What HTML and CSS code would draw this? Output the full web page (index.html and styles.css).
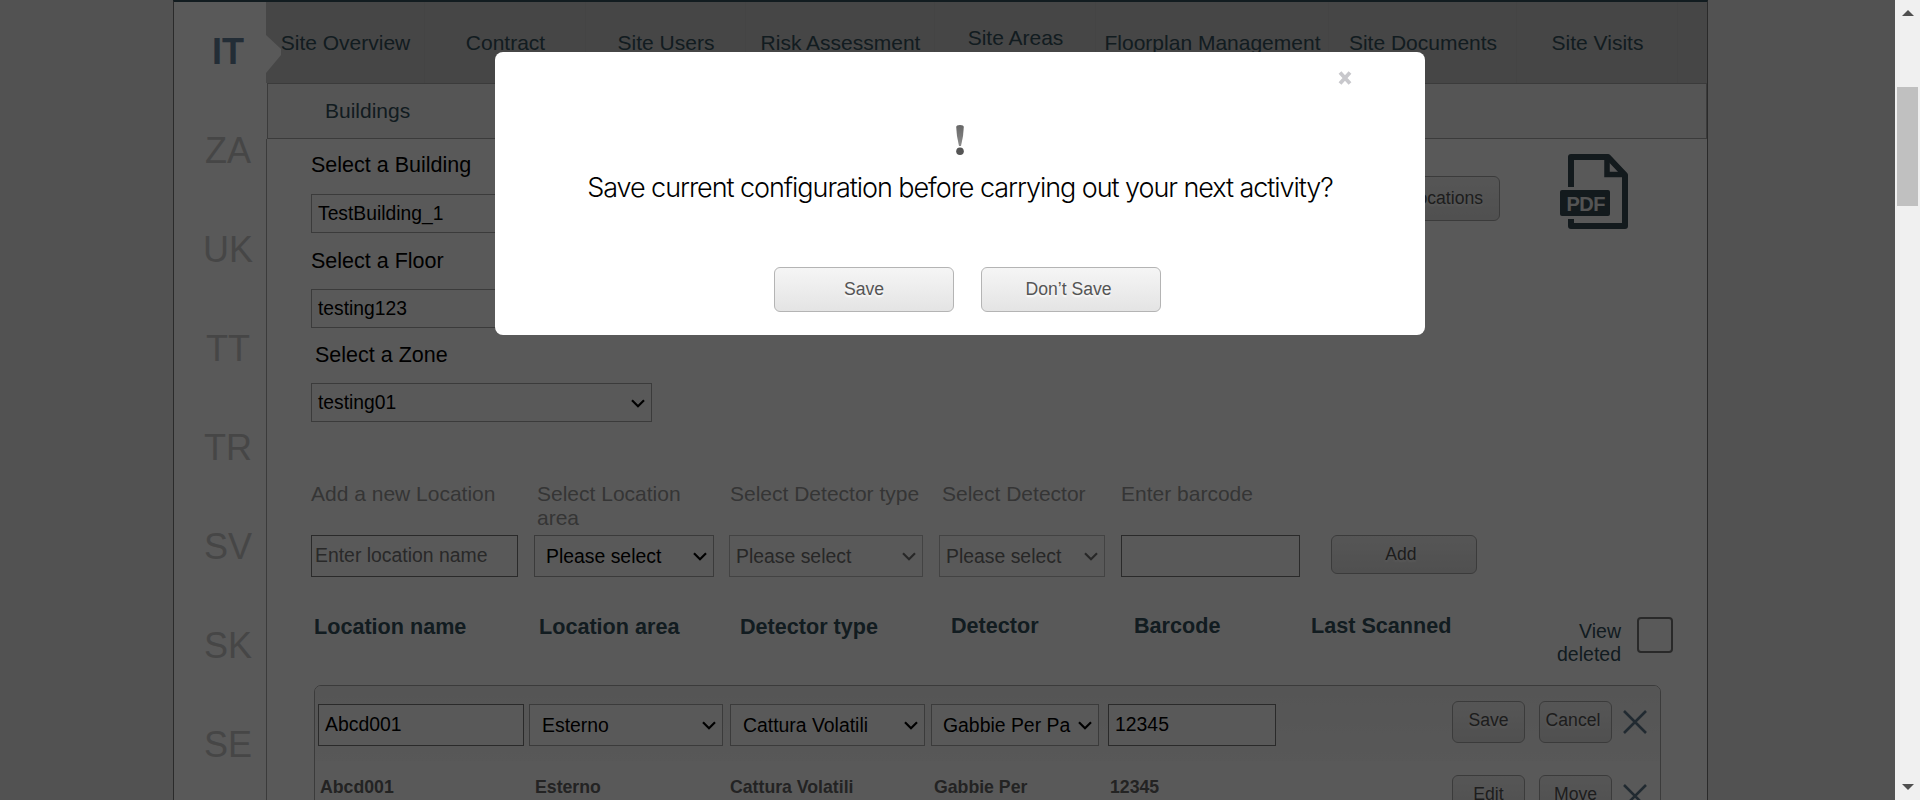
FILE: index.html
```html
<!DOCTYPE html>
<html lang="en">
<head>
<meta charset="utf-8">
<title>Site locations</title>
<link rel="stylesheet" href="styles.css">
</head>
<body>
<svg class="defs" width="0" height="0">
  <symbol id="chev" viewBox="0 0 14 9"><path d="M1 1.3 7 7.3 13 1.3" fill="none" stroke="currentColor" stroke-width="2.2"/></symbol>
  <symbol id="cross" viewBox="0 0 26 26"><path d="M2 2 24 24M24 2 2 24" fill="none" stroke="#60798c" stroke-width="2.6"/></symbol>
</svg>
<div class="page">
  <aside class="side">
    <div class="country current">IT</div><div class="country">ZA</div><div class="country">UK</div><div class="country">TT</div><div class="country">TR</div><div class="country">SV</div><div class="country">SK</div><div class="country">SE</div>
  </aside>
  <main class="main">
    <nav class="nav">
      <svg class="pointer" width="15" height="38" viewBox="0 0 15 38"><path d="M0 0 15 14V20L0 38Z" fill="#fff"/></svg>
      <a>Site Overview</a><a>Contract</a><a>Site Users</a><a>Risk Assessment</a><a class="raised">Site Areas</a><a>Floorplan Management</a><a>Site Documents</a><a>Site Visits</a>
    </nav>
    <div class="subnav">Buildings</div>
    <section class="content">
      <div class="top">
        <div class="pickers">
          <div class="label">Select a Building</div>
          <div class="field pick">TestBuilding_1<svg class="chev"><use href="#chev"/></svg></div>
          <div class="label">Select a Floor</div>
          <div class="field pick">testing123<svg class="chev"><use href="#chev"/></svg></div>
          <div class="label zone">Select a Zone</div>
          <div class="field pick">testing01<svg class="chev"><use href="#chev"/></svg></div>
        </div>
        <div class="btn import">Import Locations</div>
        <svg class="pdf" width="68" height="75" viewBox="0 0 68 75">
          <path d="M11 33V3H48L65 21V72H11V65" fill="none" stroke="#384a54" stroke-width="6" stroke-linejoin="round"/>
          <path d="M47 3V20.500H65" fill="none" stroke="#384a54" stroke-width="5.500"/>
          <rect y="36" width="50" height="26" rx="2" fill="#384a54"/>
          <text x="6.500" y="56.500" textLength="39" class="pdf-text">PDF</text>
        </svg>
      </div>
      <div class="add-row labels">
        <div>Add a new Location</div><div>Select Location area</div><div>Select Detector type</div><div>Select Detector</div><div>Enter barcode</div>
      </div>
      <div class="add-row">
        <div class="field input hint">Enter location name</div>
        <div class="field sel wide">Please select<svg class="chev"><use href="#chev"/></svg></div>
        <div class="field sel off">Please select<svg class="chev"><use href="#chev"/></svg></div>
        <div class="field sel off">Please select<svg class="chev"><use href="#chev"/></svg></div>
        <div class="field input"></div>
        <div class="btn add">Add</div>
      </div>
      <div class="heads">
        <div>Location name</div><div>Location area</div><div>Detector type</div><div class="up">Detector</div><div class="up">Barcode</div><div class="up">Last Scanned</div>
        <div class="deleted">View deleted</div><span class="check"></span>
      </div>
      <div class="table">
        <div class="row edit">
          <div class="field input name">Abcd001</div>
          <div class="field sel area">Esterno<svg class="chev"><use href="#chev"/></svg></div>
          <div class="field sel type">Cattura Volatili<svg class="chev"><use href="#chev"/></svg></div>
          <div class="field sel det">Gabbie Per Pa<svg class="chev"><use href="#chev"/></svg></div>
          <div class="field input code">12345</div>
          <div class="acts"><div class="btn small">Save</div><div class="btn small">Cancel</div><svg class="cross"><use href="#cross"/></svg></div>
        </div>
        <div class="row view">
          <div>Abcd001</div><div>Esterno</div><div>Cattura Volatili</div><div>Gabbie Per</div><div>12345</div>
          <div class="acts"><div class="btn small">Edit</div><div class="btn small">Move</div><svg class="cross"><use href="#cross"/></svg></div>
        </div>
      </div>
    </section>
  </main>
</div>
<div class="overlay">
  <div class="modal">
    <svg class="close" width="14" height="14" viewBox="0 0 14 14"><path d="M2 1.500 12 12.500M12 1.500 2 12.500" stroke="#c8c8cc" stroke-width="3.800"/></svg>
    <svg class="bang" width="10" height="32" viewBox="0 0 10 32">
      <defs><linearGradient id="g" x1="0" y1="0" x2="0" y2="1"><stop offset="0" stop-color="#666"/><stop offset="1" stop-color="#8c8c8c"/></linearGradient></defs>
      <path d="M1.200 3Q1.200 1 5 1T8.800 3Q8.600 12 6 22H4Q1.400 12 1.200 3Z" fill="url(#g)"/><circle cx="5" cy="27.300" r="3.800" fill="#555"/>
    </svg>
    <div class="question">Save current configuration before carrying out your next activity?</div>
    <div class="choices"><div class="btn big">Save</div><div class="btn big dont">Don’t Save</div></div>
  </div>
</div>
<div class="scroll">
  <svg width="12" height="6" viewBox="0 0 12 6"><path d="M0 6 6 0 12 6Z" fill="#505050"/></svg>
  <div class="thumb"></div>
  <svg width="12" height="6" viewBox="0 0 12 6"><path d="M0 0H12L6 6Z" fill="#505050"/></svg>
</div>
</body>
</html>
```
FILE: styles.css
```css
* { box-sizing: border-box; }
body { margin: 0; height: 800px; overflow: hidden; background: #ebebeb; font: 21px/24px "Liberation Sans", Arial, sans-serif; color: #000; }
.defs { position: absolute; }
.page { width: 1535px; height: 800px; margin-left: 173px; display: flex; overflow: hidden; background: #fff; border: 1px solid #787878; border-width: 0 1px; border-top: 2px solid #34505c; }
.side { width: 92px; flex: none; padding: 29px 0 0 16px; background: #fff; }
.country { height: 99px; font-size: 36px; line-height: 42px; text-align: center; color: #c8c8c8; }
.current { font-weight: bold; color: #64809a; }
.main { width: 1441px; flex: none; }
.nav { position: relative; display: grid; grid-template-columns: 159px 161px 160px 189px 161px 233px 188px 161px; height: 81px; background: #c8c8c8; }
.nav a { padding: 29px 0 0 1px; text-align: center; white-space: nowrap; color: #34505c; border-right: 1px solid #c2c2c2; }
.nav .raised { padding-top: 24px; }
.pointer { position: absolute; left: 0; top: 33px; }
.subnav { height: 56px; margin-left: 1px; padding: 15px 0 0 57px; background: #f3f3f3; border: 1px solid #a8a8a8; color: #34505c; }
.content { height: 661px; padding: 14px 0 0 44px; border-left: 1px solid #a8a8a8; }
.top { display: flex; height: 269px; }
.pickers { width: 341px; }
.label { height: 24px; font-size: 21.5px; }
.pick + .label { margin-top: 16px; }
.pick + .zone { margin: 15px 0 0 4px; }
.field { display: flex; align-items: center; justify-content: space-between; border: 1px solid #a8a8a8; background: #fff; font-size: 19.4px; white-space: nowrap; }
.pick { height: 39px; margin-top: 16px; padding: 1px 6px 0 6px; font-size: 19.3px; }
.label:first-child + .pick { margin-top: 17px; }
.chev { width: 14px; height: 9px; flex: none; }
.btn { display: flex; justify-content: center; border: 1px solid #a9a9a9; border-radius: 6px; background: linear-gradient(#f5f5f5, #e4e4e4); font-size: 17.6px; color: #555; text-shadow: 0 2px 2px #fff; }
.import { width: 190px; height: 45px; margin: 23px 0 0 658px; padding: 9px 0 0 26px; }
.pdf { margin: 1px 0 0 60px; }
.pdf-text { font: bold 20px "Liberation Sans", Arial, sans-serif; fill: #f0f0f0; }
.add-row { display: grid; grid-template-columns: 223px 195px 210px 182px 210px 146px; justify-items: start; height: 42px; }
.labels { height: 48px; margin: 60px 0 5px; color: #999; grid-template-columns: 226px 193px 212px 179px 210px; }
.labels div:nth-child(2) { width: 170px; }
.input { height: 42px; border-color: #787878; padding: 0 7px 3px 6px; }
.hint { padding-left: 3px; color: #757575; width: 207px; }
.add-row .sel { height: 42px; padding: 0 6px 0 6px; }
.add-row .wide { width: 180px; padding-left: 11px; }
.add-row .field:nth-child(3) { width: 158px; }
.add-row .field:nth-child(3) { width: 194px; }
.add-row .field:nth-child(4) { width: 166px; }
.add-row .field:nth-child(5) { width: 179px; }
.off { color: #707070; border-color: #c0c0c0; }
.add { width: 146px; height: 39px; padding: 6px 6px 0 0; }
.heads { display: grid; grid-template-columns: 225px 201px 211px 183px 177px 230px 80px 36px; height: 70px; margin: 38px 0 0 3px; font-size: 21.6px; font-weight: bold; color: #34505c; }
.up { margin-top: -1px; }
.deleted { font-size: 19.5px; font-weight: normal; line-height: 23px; text-align: right; margin-top: 5px; }
.check { width: 36px; height: 36px; margin: 2px 0 0 16px; border: 2px solid #767676; border-radius: 4px; background: #fff; }
.table { width: 1347px; height: 130px; margin-left: 3px; border: 1px solid #a8a8a8; border-radius: 7px 7px 0 0; }
.row { display: grid; grid-template-columns: 211px 201px 201px 177px 344px 1fr; }
.edit { height: 75px; padding: 18px 0 0 3px; background: linear-gradient(#f3f3f3, #fbfbfb); border-radius: 6px 6px 0 0; }
.edit .sel { height: 42px; padding: 0 6px 0 12px; }
.name { width: 206px; }
.area { width: 194px; }
.type { width: 195px; }
.edit .det { width: 168px; padding-left: 11px; }
.code { width: 168px; }
.acts { display: flex; align-items: flex-start; margin-top: -3px; }
.small { width: 73px; height: 42px; margin-right: 14px; padding-top: 6px; flex: none; }
.small + .small { margin-right: 10px; padding-right: 5px; }
.cross { width: 26px; height: 26px; margin-top: 8px; flex: none; }
.view { height: 60px; padding: 14px 0 0 5px; font-size: 17.7px; font-weight: bold; color: #666; grid-template-columns: 215px 195px 204px 176px 342px 1fr; }
.view .acts { font-weight: normal; margin-top: 0; }
.view .small + .small { padding-right: 0; }
.overlay { position: absolute; left: 0; top: 0; width: 1895px; height: 800px; background: rgba(0,0,0,.65); }
.modal { width: 930px; height: 283px; margin: 52px 0 0 495px; background: #fff; border-radius: 8px; display: flex; flex-direction: column; align-items: center; padding-top: 19px; }
.close { align-self: flex-end; margin-right: 73px; flex: none; }
.bang { margin-top: 39px; flex: none; }
.question { font: 300 27px/32px Inter, "Liberation Sans", sans-serif; letter-spacing: -1.06px; margin-top: 16px; white-space: nowrap; }
.choices { display: flex; gap: 27px; margin: 63px 0 0 15px; }
.big { width: 180px; height: 45px; padding-top: 9px; border-color: #b4b4b4; }
.dont { padding-right: 5px; }
.scroll { position: absolute; right: 0; top: 0; width: 25px; height: 800px; background: #f0f0f0; display: flex; flex-direction: column; align-items: center; padding: 10px 0; }
.thumb { width: 21px; height: 119px; margin: 71px 0 auto; background: #c0c0c0; }
```
